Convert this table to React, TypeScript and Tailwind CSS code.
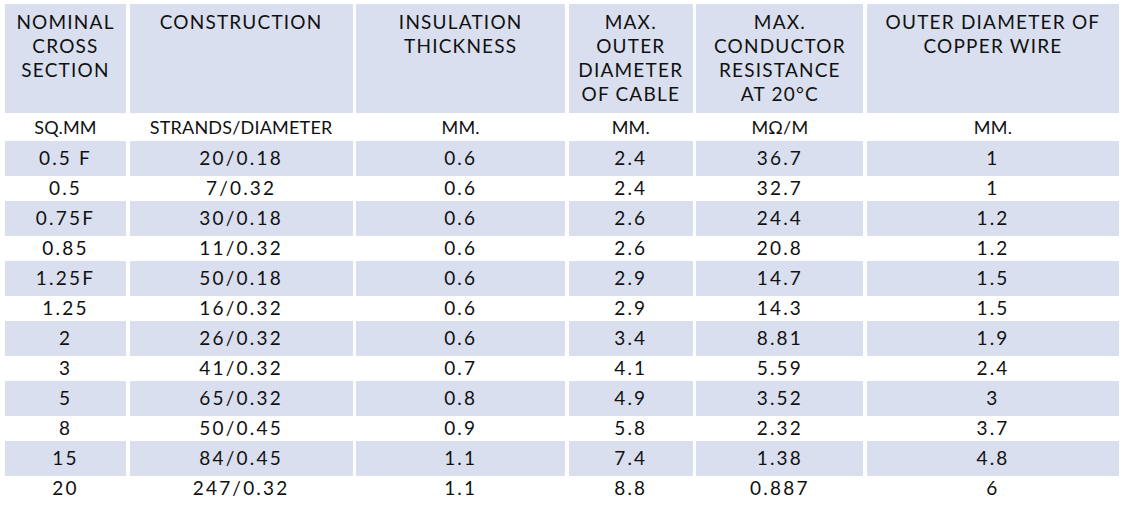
import React from "react";

const headers: string[][] = [
  ["NOMINAL", "CROSS", "SECTION"],
  ["CONSTRUCTION"],
  ["INSULATION", "THICKNESS"],
  ["MAX.", "OUTER", "DIAMETER", "OF CABLE"],
  ["MAX.", "CONDUCTOR", "RESISTANCE", "AT 20°C"],
  ["OUTER DIAMETER OF", "COPPER WIRE"],
];

const units = ["SQ.MM", "STRANDS/DIAMETER", "MM.", "MM.", "MΩ/M", "MM."];

const rows: string[][] = [
  ["0.5 F", "20/0.18", "0.6", "2.4", "36.7", "1"],
  ["0.5", "7/0.32", "0.6", "2.4", "32.7", "1"],
  ["0.75F", "30/0.18", "0.6", "2.6", "24.4", "1.2"],
  ["0.85", "11/0.32", "0.6", "2.6", "20.8", "1.2"],
  ["1.25F", "50/0.18", "0.6", "2.9", "14.7", "1.5"],
  ["1.25", "16/0.32", "0.6", "2.9", "14.3", "1.5"],
  ["2", "26/0.32", "0.6", "3.4", "8.81", "1.9"],
  ["3", "41/0.32", "0.7", "4.1", "5.59", "2.4"],
  ["5", "65/0.32", "0.8", "4.9", "3.52", "3"],
  ["8", "50/0.45", "0.9", "5.8", "2.32", "3.7"],
  ["15", "84/0.45", "1.1", "7.4", "1.38", "4.8"],
  ["20", "247/0.32", "1.1", "8.8", "0.887", "6"],
];

export default function App() {
  return (
    <div
      className="w-[1122px] h-[518px] bg-white text-[#111] overflow-hidden pt-[4px] pl-[5px]"
      style={{ fontFamily: "Lato, 'Liberation Sans', sans-serif" }}
    >
      <div className="grid grid-cols-[121px_223px_209px_124px_167px_252px] gap-x-[3.6px]">
        {headers.map((lines, i) => (
          <div
            key={"h" + i}
            className="h-[109px] bg-[#d9dfee] pt-[6px] text-center text-[19px] leading-[24px] tracking-[1.2px]"
          >
            {lines.map((l, j) => (
              <div key={j}>{l}</div>
            ))}
          </div>
        ))}
        {units.map((u, i) => (
          <div
            key={"u" + i}
            className="h-[28px] flex items-center justify-center text-[18px] tracking-[0.2px]"
          >
            {u}
          </div>
        ))}
        {rows.map((r, ri) =>
          r.map((c, ci) => (
            <div
              key={ri + "-" + ci}
              className={
                ri % 2 === 0
                  ? "h-[35px] bg-[#d9dfee] flex items-center justify-center text-[19px] tracking-[2.2px]"
                  : "h-[25px] flex items-center justify-center text-[19px] tracking-[2.2px]"
              }
            >
              {c}
            </div>
          ))
        )}
      </div>
    </div>
  );
}
